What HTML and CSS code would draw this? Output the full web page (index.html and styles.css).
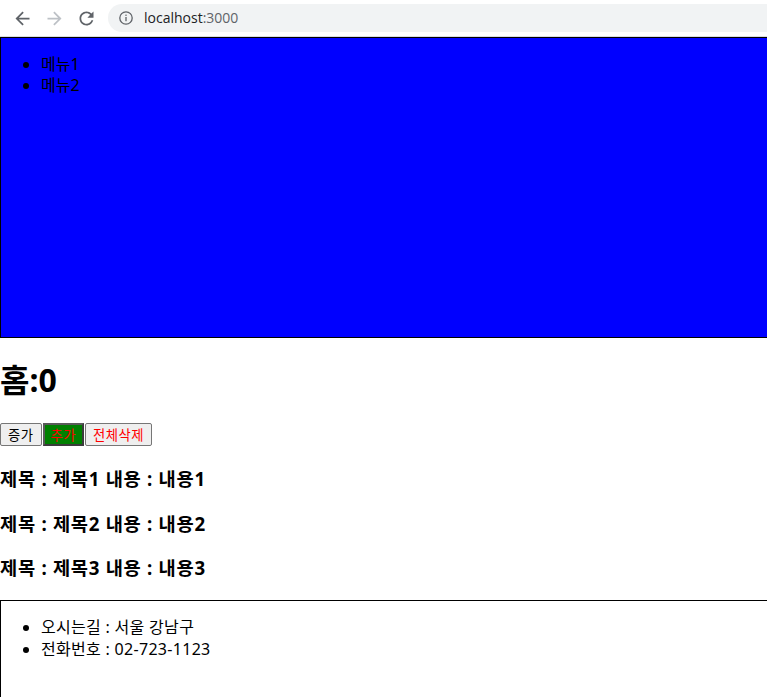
FILE: index.html
```html
<!DOCTYPE html>
<html lang="ko">

<head>
    <meta charset="UTF-8">
    <meta name="viewport" content="width=device-width, initial-scale=1.0">
    <title>React App</title>
    <link rel="stylesheet" href="styles.css">
</head>

<body>
    <div class="browser-bar">
        <div class="nav-btn">
            <svg width="21" height="21" viewBox="0 0 24 24"><path fill="#5f6368" d="M20 11H7.83l5.59-5.59L12 4l-8 8 8 8 1.41-1.41L7.83 13H20v-2z"/></svg>
        </div>
        <div class="nav-btn">
            <svg width="21" height="21" viewBox="0 0 24 24"><path fill="#bdc1c6" d="M12 4l-1.41 1.41L16.17 11H4v2h12.17l-5.58 5.59L12 20l8-8z"/></svg>
        </div>
        <div class="nav-btn">
            <svg width="21" height="21" viewBox="0 0 24 24"><path fill="#5f6368" d="M17.65 6.35C16.2 4.9 14.21 4 12 4c-4.42 0-7.99 3.58-7.99 8s3.57 8 7.990 8c3.73 0 6.84-2.55 7.73-6h-2.08c-.82 2.33-3.04 4-5.65 4-3.31 0-6-2.69-6-6s2.69-6 6-6c1.66 0 3.14.69 4.22 1.78L13 11h7V4l-2.35 2.35z"/></svg>
        </div>
        <div class="address">
            <svg width="14" height="14" viewBox="0 0 14 14"><circle cx="7" cy="7" r="6.2" fill="none" stroke="#5f6368" stroke-width="1.3"/><rect x="6.35" y="6" width="1.3" height="4.2" fill="#5f6368"/><rect x="6.35" y="3.6" width="1.3" height="1.3" fill="#5f6368"/></svg>
            <span class="url">localhost<span class="port">:3000</span></span>
        </div>
    </div>

    <header class="top">
        <ul>
            <li>메뉴1</li>
            <li>메뉴2</li>
        </ul>
    </header>

    <div class="home">
        <h1>홈:0</h1>
        <div class="buttons"><button>증가</button><button class="add">추가</button><button class="clear">전체삭제</button></div>
        <h3>제목 : 제목1 내용 : 내용1</h3>
        <h3>제목 : 제목2 내용 : 내용2</h3>
        <h3>제목 : 제목3 내용 : 내용3</h3>
    </div>

    <footer class="bottom">
        <ul>
            <li>오시는길 : 서울 강남구</li>
            <li>전화번호 : 02-723-1123</li>
        </ul>
    </footer>
</body>
</html>
```

FILE: styles.css
```css
html,
body {
    overflow: hidden;
}

body {
    font-family: "Noto Sans", "Noto Sans CJK KR", sans-serif;
    line-height: 1.34;
    color: #000000;
    margin: 0;
    padding: 0;
}

/* browser toolbar */
.browser-bar {
    display: flex;
    align-items: center;
    height: 36px;
    padding-left: 6px;
    background-color: #ffffff;
    border-bottom: 1px solid #dadce0;
}

.browser-bar .nav-btn {
    width: 32px;
    height: 28px;
    display: flex;
    align-items: center;
    justify-content: center;
}

.browser-bar .address {
    flex: 1;
    display: flex;
    align-items: center;
    gap: 11px;
    height: 28px;
    margin-left: 6px;
    padding-left: 11px;
    background-color: #f1f3f4;
    border-radius: 14px 0 0 14px;
}

.browser-bar .url {
    font-family: "Open Sans", "Noto Sans", sans-serif;
    font-size: 14px;
    color: #202124;
    line-height: 1;
}

.browser-bar .port {
    color: #5f6368;
}

/* page */
.top {
    width: 100%;
    height: 299px;
    background-color: blue;
    border: 1px solid black;
}

.top ul,
.bottom ul {
    margin: 16px 0;
    padding-left: 40px;
}

.bottom li {
    letter-spacing: 0.3px;
}

.home h1 {
    font-size: 32px;
    margin: 21px 0;
}

.buttons {
    display: flex;
    gap: 1px;
    height: 24px;
}

.buttons button {
    font-family: "Noto Sans CJK KR", sans-serif;
    font-size: 13.33px;
    letter-spacing: 0.5px;
    line-height: 1;
    height: 23px;
    margin: 0;
    padding: 1px 7px;
    background-color: #efefef;
    border: 1px solid #767676;
    border-radius: 2px;
    color: #000000;
}

.buttons .add {
    padding: 1px 6px;
    background-color: green;
    color: red;
    border: 2px solid #3b3b3b;
    border-top-color: #5a5a5a;
    border-left-color: #5a5a5a;
    border-radius: 0;
}

.buttons .clear {
    color: red;
}

.home h3 {
    font-size: 18.72px;
    margin: 18.72px 0;
    line-height: 1.4;
    letter-spacing: 0.7px;
}

.bottom {
    width: 100%;
    height: 120px;
    border: 1px solid black;
}
```
